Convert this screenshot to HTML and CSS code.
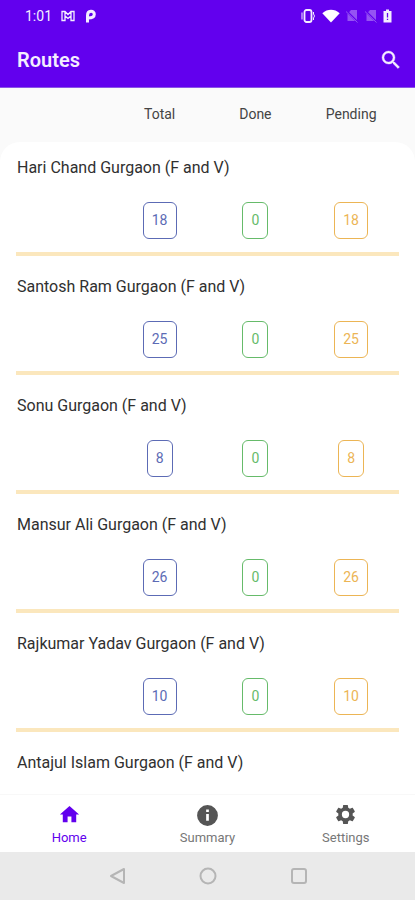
FILE: index.html
```
<!DOCTYPE html>
<html lang="en">
<head>
<meta charset="utf-8">
<meta name="viewport" content="width=device-width, initial-scale=1">
<title>Routes</title>
<link rel="stylesheet" href="styles.css">
</head>
<body>
<div class="screen">
  <header class="top">
    <div class="status">
      <span class="clock">1:01</span>
      <svg class="status-mail" width="14" height="12" viewBox="0 0 14 12" fill="none" stroke="currentColor" stroke-width="1.300"><path d="M1 1.500h3l3 3 3-3h3v9h-3V6L7 8.500 4 6v4.500H1zM4 2v4M10 2v4"/></svg>
      <svg class="status-p" width="11" height="14" viewBox="0 0 11 14" fill="none" stroke="currentColor" stroke-width="3"><path d="M2.500 13.500V6.500C2.500 1 9.300 1.200 9.300 5.300 9.300 8.500 6 9 3 9"/></svg>
      <div class="status-right">
        <svg width="14" height="14" viewBox="0 0 14 14" fill="none" stroke="currentColor"><rect x="3.500" y="1" width="7" height="12" rx="2" stroke-width="1.800"/><path d="M1 3.500v7M12.500 3v2l1 2-1 2v2"/></svg>
        <svg class="wifi" width="18" height="14" viewBox="0 0 18 14" fill="currentColor"><path d="M9 13.500.300 4.300C5.500-.300 12.500-.300 17.700 4.300z"/></svg>
        <svg class="faint sim-a" width="13" height="14" viewBox="0 0 13 14"><path fill="currentColor" d="M5 1h6v11H1.500V5z"/><path d="m.500 2 11.500 11.500" stroke="#6200ee" stroke-width="2"/><path d="m0 2.500 11.500 11" stroke="currentColor"/></svg>
        <svg class="faint sim-b" width="13" height="14" viewBox="0 0 13 14"><path fill="currentColor" d="M5 1h6v11H1.500V5z"/><path d="m.500 2 11.500 11.500" stroke="#6200ee" stroke-width="2"/><path d="m0 2.500 11.500 11" stroke="currentColor"/></svg>
        <svg class="battery" width="9" height="14" viewBox="0 0 9 14"><path fill="currentColor" d="M3 .500h3V2h2.500v11.500h-8V2H3z"/><path stroke="#6200ee" stroke-width="1.300" d="M4.500 4v4.500M4.500 9.800v1.200"/></svg>
      </div>
    </div>
    <div class="appbar">
      <h1>Routes</h1>
      <button class="search" type="button" aria-label="Search">
        <svg width="24" height="24" viewBox="0 0 24 24" fill="currentColor" stroke="currentColor" stroke-width=".400"><path d="M15.500 14h-.790l-.280-.270A6.470 6.470 0 0 0 16 9.500 6.500 6.500 0 1 0 9.500 16c1.610 0 3.090-.590 4.230-1.570l.270.280v.790l5 4.990L20.490 19l-4.990-5zm-6 0C7.010 14 5 11.990 5 9.500S7.010 5 9.500 5 14 7.010 14 9.500 11.990 14 9.500 14z"/></svg>
      </button>
    </div>
  </header>

  <div class="columns">
    <span class="col-total">Total</span><span>Done</span><span>Pending</span>
  </div>

  <main class="sheet">
    <section class="route">
      <h2>Hari Chand Gurgaon (F and V)</h2>
      <div class="counts"><span class="count total">18</span><span class="count done">0</span><span class="count pending">18</span></div>
    </section>
    <section class="route">
      <h2>Santosh Ram Gurgaon (F and V)</h2>
      <div class="counts"><span class="count total">25</span><span class="count done">0</span><span class="count pending">25</span></div>
    </section>
    <section class="route">
      <h2>Sonu Gurgaon (F and V)</h2>
      <div class="counts"><span class="count total">8</span><span class="count done">0</span><span class="count pending">8</span></div>
    </section>
    <section class="route">
      <h2>Mansur Ali Gurgaon (F and V)</h2>
      <div class="counts"><span class="count total">26</span><span class="count done">0</span><span class="count pending">26</span></div>
    </section>
    <section class="route">
      <h2>Rajkumar Yadav Gurgaon (F and V)</h2>
      <div class="counts"><span class="count total">10</span><span class="count done">0</span><span class="count pending">10</span></div>
    </section>
    <section class="route">
      <h2>Antajul Islam Gurgaon (F and V)</h2>
    </section>
  </main>

  <nav class="tabs">
    <a class="tab active" href="#home">
      <svg width="23" height="23" viewBox="0 0 24 24" fill="currentColor"><path d="M10 20v-6h4v6h5v-8h3L12 3 2 12h3v8z"/></svg>
      <span>Home</span>
    </a>
    <a class="tab" href="#summary">
      <svg width="25" height="25" viewBox="0 0 24 24" fill="currentColor"><path d="M12 2a10 10 0 1 0 0 20 10 10 0 0 0 0-20zm1.300 15h-2.600v-6.500h2.600V17zm0-8.300h-2.600V6.200h2.600v2.500z"/></svg>
      <span>Summary</span>
    </a>
    <a class="tab" href="#settings">
      <svg width="23" height="23" viewBox="0 0 24 24" fill="currentColor"><path d="M19.430 12.980c.040-.320.070-.640.070-.980s-.030-.660-.070-.980l2.110-1.650c.190-.150.240-.420.120-.640l-2-3.460c-.120-.220-.390-.300-.610-.220l-2.490 1c-.520-.400-1.080-.730-1.690-.980l-.380-2.650A.488.488 0 0 0 14 2h-4c-.250 0-.460.180-.490.420l-.380 2.650c-.610.250-1.170.590-1.690.980l-2.490-1c-.230-.090-.490 0-.610.220l-2 3.460c-.130.220-.070.490.120.640l2.110 1.650c-.040.320-.070.650-.070.980s.030.660.070.980l-2.110 1.650c-.190.150-.240.420-.120.640l2 3.460c.120.220.390.300.610.220l2.490-1c.520.400 1.080.730 1.690.980l.380 2.650c.030.240.240.420.490.420h4c.250 0 .460-.180.490-.420l.380-2.650c.610-.250 1.170-.590 1.690-.980l2.490 1c.230.090.490 0 .610-.220l2-3.460c.120-.220.070-.490-.120-.640l-2.110-1.650zM12 15.800a3.800 3.800 0 1 1 0-7.600 3.800 3.800 0 0 1 0 7.600z"/></svg>
      <span>Settings</span>
    </a>
  </nav>

  <div class="system">
    <button type="button" aria-label="Back"><svg width="18" height="18" viewBox="0 0 18 18"><path d="M16 2v14L3 9z"/></svg></button>
    <button type="button" aria-label="Home screen"><svg width="18" height="18" viewBox="0 0 18 18"><circle cx="9" cy="9" r="7.500"/></svg></button>
    <button type="button" aria-label="Recent apps"><svg width="18" height="18" viewBox="0 0 18 18"><rect x="2" y="2" width="14" height="14" rx="2"/></svg></button>
  </div>
</div>
</body>
</html>
```

FILE: styles.css
```
* { box-sizing: border-box; }

body {
  margin: 0;
  font-family: Roboto, "Liberation Sans", sans-serif;
  color: #333;
  background: #fafafa;
}

svg { display: block; }

button {
  padding: 0;
  border: 0;
  background: none;
  color: inherit;
}

.screen {
  display: flex;
  flex-direction: column;
  height: 100vh;
}

.top {
  flex: none;
  padding-bottom: 6px;
  color: #f4edff;
  background: #6200ee;
  border-bottom: 1px solid #8a55e6;
}

.status {
  display: flex;
  align-items: center;
  height: 32px;
  padding: 0 23px 0 25px;
}

.clock {
  font-size: 14px;
  line-height: 32px;
}

.status-mail { margin-left: 9px; }
.status-p { margin-left: 10px; }

.status-right {
  display: flex;
  align-items: center;
  margin-left: auto;
}

.wifi { margin-left: 7px; color: #fff; }
.faint { opacity: 0.35; }
.sim-a { margin-left: 6px; }
.sim-b { margin-left: 6px; }
.battery { margin-left: 5px; }

.appbar {
  display: flex;
  align-items: center;
  justify-content: space-between;
  height: 49px;
  padding: 6px 12px 0 17px;
}

h1 {
  margin: 0;
  font-size: 20px;
  line-height: 24px;
  font-weight: 600;
}

.columns,
.counts {
  display: grid;
  grid-template-columns: repeat(4, 1fr);
  justify-items: center;
}

.columns {
  flex: none;
  padding: 16px 16px 18px;
  font-size: 14px;
  line-height: 20px;
  color: #444;
}

.col-total,
.total { grid-column: 2; }

.sheet {
  flex: 1;
  min-height: 0;
  overflow: hidden;
  padding: 0 16px;
  background: #fff;
  border-radius: 20px 20px 0 0;
}

.route {
  padding-top: 14px;
  border-bottom: 4px solid #fbe7bd;
  margin-bottom: 5px;
}

h2 {
  margin: 0 0 22px 1px;
  font-size: 16px;
  line-height: 24px;
  font-weight: 400;
  color: #303030;
}

.counts { padding-bottom: 13px; }

.count {
  padding: 0 8px;
  border: 1px solid;
  border-radius: 6px;
  font-size: 14px;
  line-height: 35px;
}

.total { color: #5c6bb5; }
.done { color: #66bb6a; }
.pending { color: #ecb555; }

.tabs {
  display: grid;
  grid-template-columns: repeat(3, 1fr);
  flex: none;
  height: 58px;
  background: #fff;
  border-top: 1px solid #f8f8f8;
}

.tab {
  display: flex;
  flex-direction: column;
  align-items: center;
  justify-content: space-between;
  padding: 8px 0 6px;
  font-size: 13px;
  line-height: 16px;
  color: #777;
  text-decoration: none;
}

.tab svg { color: #555; }

.active,
.active svg { color: #6200ee; }

.system {
  display: flex;
  justify-content: center;
  align-items: center;
  gap: 73px;
  flex: none;
  height: 48px;
  background: #eaeaea;
}

.system svg {
  fill: none;
  stroke: #b5b5b5;
  stroke-width: 2;
  stroke-linejoin: round;
}
```
